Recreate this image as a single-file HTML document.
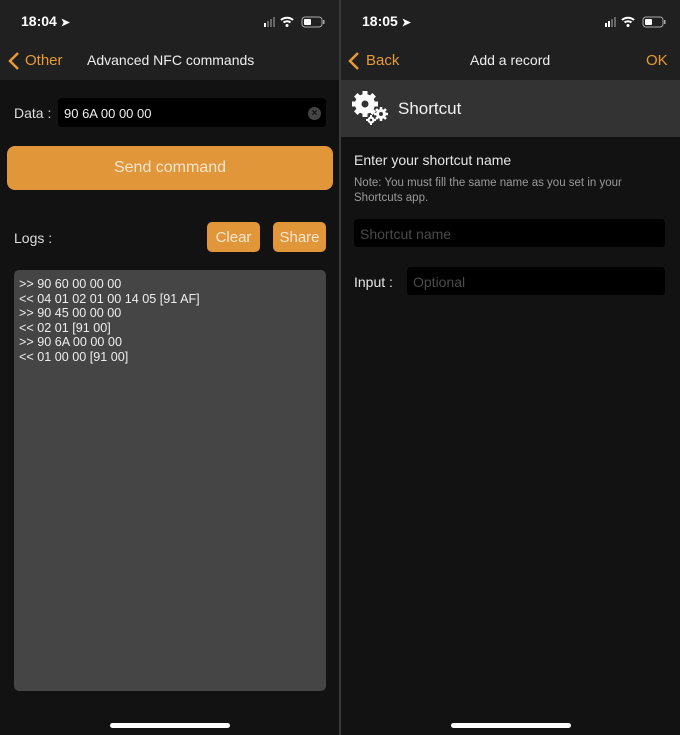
<!DOCTYPE html>
<html><head><style>
*{margin:0;padding:0;box-sizing:border-box}
body{width:680px;height:735px;background:#121212;font-family:"Liberation Sans",sans-serif;position:relative;overflow:hidden;color:#e8e8e8}
.p{position:absolute;top:0;width:339px;height:735px;background:#121212;overflow:hidden}
.a{position:absolute}
.nav{position:absolute;left:0;top:0;width:100%;height:80px;background:#202020}
.time{position:absolute;left:21px;top:13px;font-size:14px;font-weight:bold;color:#fff}
.o{color:#e59a35}
.home{position:absolute;left:110px;top:723px;width:120px;height:5px;border-radius:3px;background:#fff}
.btn{position:absolute;background:#e1963a;border-radius:5px;color:#f6e6cf;display:flex;align-items:center;justify-content:center}
</style></head><body>
<div class="a" style="left:339px;top:0;width:3px;height:735px;background:#3a3a3a"></div>

<div class="p" style="left:0">
 <div class="nav">
  <div class="time">18:04 <span style="font-size:11px">➤</span></div>
  <svg class="a" style="left:262px;top:15px" width="66" height="14">
   <rect x="2" y="8" width="2" height="4" fill="#fff"/><rect x="5" y="6" width="2" height="6" fill="#666"/><rect x="8" y="4" width="2" height="8" fill="#666"/><rect x="11" y="2" width="2" height="10" fill="#666"/>
   <path d="M19 5a9 9 0 0 1 12 0M21.5 7.5a5.5 5.5 0 0 1 7 0" stroke="#fff" stroke-width="2" fill="none"/><circle cx="25" cy="10.5" r="1.5" fill="#fff"/>
   <rect x="40" y="2" width="20" height="10" rx="3" stroke="#aaa" fill="none"/><rect x="42" y="4" width="7" height="6" rx="1" fill="#fff"/><rect x="61" y="5" width="1.5" height="4" fill="#aaa"/>
  </svg>
  <svg class="a" style="left:8px;top:52px" width="12" height="18"><path d="M10 1L2 9l8 8" stroke="#e59a35" stroke-width="2.5" fill="none"/></svg>
  <div class="a o" style="left:25px;top:52px;font-size:15px">Other</div>
  <div class="a" style="left:87px;top:52px;font-size:14px;color:#eee">Advanced NFC commands</div>
 </div>
 <div class="a" style="left:14px;top:105px;font-size:14px;color:#ddd">Data :</div>
 <div class="a" style="left:58px;top:98px;width:268px;height:29px;background:#000;border-radius:4px"></div>
 <div class="a" style="left:64px;top:106px;font-size:13px;color:#eee">90 6A 00 00 00</div>
 <div class="a" style="left:308px;top:107px;width:13px;height:13px;border-radius:50%;background:#444;color:#111;font-size:10px;text-align:center;line-height:13px;font-weight:bold">×</div>
 <div class="btn" style="left:7px;top:146px;width:326px;height:44px;font-size:16px;border-radius:8px">Send command</div>
 <div class="a" style="left:14px;top:230px;font-size:14px;color:#ddd">Logs :</div>
 <div class="btn" style="left:207px;top:222px;width:53px;height:30px;font-size:15px">Clear</div>
 <div class="btn" style="left:273px;top:222px;width:53px;height:30px;font-size:15px">Share</div>
 <div class="a" style="left:14px;top:270px;width:312px;height:421px;background:#454545;border-radius:5px;padding:7px 5px;font-size:12.6px;line-height:14.6px;color:#eee">&gt;&gt; 90 60 00 00 00<br>&lt;&lt; 04 01 02 01 00 14 05 [91 AF]<br>&gt;&gt; 90 45 00 00 00<br>&lt;&lt; 02 01 [91 00]<br>&gt;&gt; 90 6A 00 00 00<br>&lt;&lt; 01 00 00 [91 00]</div>
 <div class="home"></div>
</div>

<div class="p" style="left:341px">
 <div class="nav">
  <div class="time">18:05 <span style="font-size:11px">➤</span></div>
  <svg class="a" style="left:262px;top:15px" width="66" height="14">
   <rect x="2" y="8" width="2" height="4" fill="#fff"/><rect x="5" y="6" width="2" height="6" fill="#fff"/><rect x="8" y="4" width="2" height="8" fill="#666"/><rect x="11" y="2" width="2" height="10" fill="#666"/>
   <path d="M19 5a9 9 0 0 1 12 0M21.5 7.5a5.5 5.5 0 0 1 7 0" stroke="#fff" stroke-width="2" fill="none"/><circle cx="25" cy="10.5" r="1.5" fill="#fff"/>
   <rect x="40" y="2" width="20" height="10" rx="3" stroke="#aaa" fill="none"/><rect x="42" y="4" width="7" height="6" rx="1" fill="#fff"/><rect x="61" y="5" width="1.5" height="4" fill="#aaa"/>
  </svg>
  <svg class="a" style="left:7px;top:52px" width="12" height="18"><path d="M10 1L2 9l8 8" stroke="#e59a35" stroke-width="2.5" fill="none"/></svg>
  <div class="a o" style="left:25px;top:52px;font-size:15px">Back</div>
  <div class="a" style="left:129px;top:52px;font-size:14px;color:#eee">Add a record</div>
  <div class="a o" style="left:305px;top:52px;font-size:15px">OK</div>
 </div>
 <div class="a" style="left:0;top:80px;width:100%;height:57px;background:#333"></div>
 <svg class="a" style="left:10px;top:90px" width="40" height="36" viewBox="0 0 40 36">
  <g fill="#fff">
   <circle cx="14" cy="14" r="10"/>
   <g stroke="#fff" stroke-width="5"><path d="M14 1v26M1 14h26M4.8 4.8l18.4 18.4M23.2 4.8l-18.4 18.4"/></g>
   <circle cx="30" cy="24" r="5"/><g stroke="#fff" stroke-width="2.5"><path d="M30 17v14M23 24h14M25 19l10 10M35 19l-10 10"/></g>
   <circle cx="20" cy="30" r="3.5"/><g stroke="#fff" stroke-width="2"><path d="M20 25v10M15 30h10"/></g>
  </g>
  <circle cx="14" cy="14" r="3.5" fill="#333"/><circle cx="30" cy="24" r="2" fill="#333"/><circle cx="20" cy="30" r="1.3" fill="#333"/>
 </svg>
 <div class="a" style="left:57px;top:99px;font-size:17px;color:#f2f2f2">Shortcut</div>
 <div class="a" style="left:13px;top:152px;font-size:14px;color:#e6e6e6">Enter your shortcut name</div>
 <div class="a" style="left:13px;top:176px;width:300px;font-size:11.5px;line-height:14.5px;color:#9a9a9a">Note: You must fill the same name as you set in your Shortcuts app.</div>
 <div class="a" style="left:13px;top:219px;width:311px;height:28px;background:#000;border-radius:4px;padding:7px 6px;font-size:14px;color:#4a4a4a">Shortcut name</div>
 <div class="a" style="left:13px;top:274px;font-size:14px;color:#e6e6e6">Input :</div>
 <div class="a" style="left:66px;top:267px;width:258px;height:28px;background:#000;border-radius:4px;padding:7px 6px;font-size:14px;color:#4a4a4a">Optional</div>
 <div class="home"></div>
</div>
</body></html>
